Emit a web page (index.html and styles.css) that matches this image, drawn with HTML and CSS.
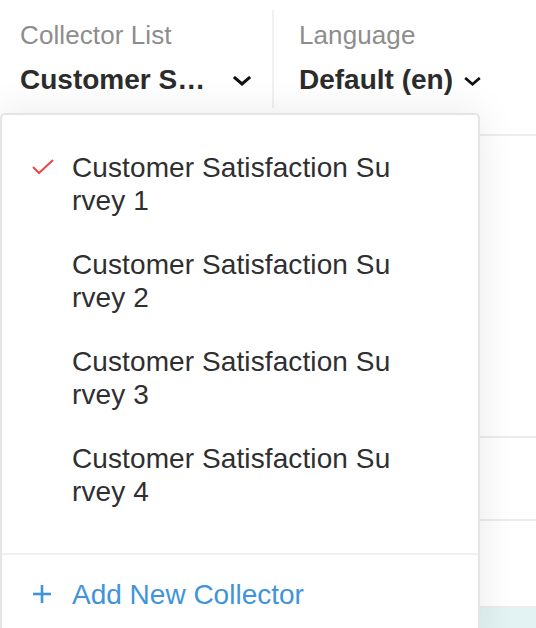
FILE: index.html
```html
<!DOCTYPE html>
<html lang="en">
<head>
<meta charset="utf-8">
<title>Collector List</title>
<link rel="stylesheet" href="styles.css">
</head>
<body>
<div class="page">
  <header class="header">
    <div class="field field-collector">
      <div class="label">Collector List</div>
      <div class="value-row">
        <span class="value value-trunc" title="Customer Satisfaction Survey 1">Customer S…</span>
        <svg class="chev" viewBox="0 0 18 10" width="18" height="10"><polyline points="2,2 9,8 16,2"/></svg>
      </div>
    </div>
    <div class="field field-lang">
      <div class="label">Language</div>
      <div class="value-row">
        <span class="value">Default (en)</span>
        <svg class="chev chev-sm" viewBox="0 0 18 10" width="17" height="9"><polyline points="2,2 9,8 16,2"/></svg>
      </div>
    </div>
  </header>
  <main class="content">
    <div class="row row-a"></div>
    <div class="row row-b"></div>
    <div class="row row-c"></div>
    <div class="row row-d"></div>
    <div class="band"></div>
  </main>

  <div class="menu">
    <ul class="menu-list">
      <li class="item selected">
        <span class="mark"><svg viewBox="0 0 24 18" width="24" height="18"><polyline points="2,9 8,15 22,2"/></svg></span>
        <span class="item-text">Customer Satisfaction Survey 1</span>
      </li>
      <li class="item">
        <span class="mark"></span>
        <span class="item-text">Customer Satisfaction Survey 2</span>
      </li>
      <li class="item">
        <span class="mark"></span>
        <span class="item-text">Customer Satisfaction Survey 3</span>
      </li>
      <li class="item">
        <span class="mark"></span>
        <span class="item-text">Customer Satisfaction Survey 4</span>
      </li>
    </ul>
    <div class="menu-footer">
      <span class="mark plus"><svg viewBox="0 0 20 20" width="20" height="20"><line x1="10" y1="1" x2="10" y2="19"/><line x1="1" y1="10" x2="19" y2="10"/></svg></span>
      <span class="add-text">Add New Collector</span>
    </div>
  </div>
</div>
</body>
</html>
```

FILE: styles.css
```css
* { box-sizing: border-box; }

html, body {
  margin: 0;
  padding: 0;
  background: #ffffff;
}

body {
  font-family: "Liberation Sans", Arial, Helvetica, sans-serif;
  color: #333333;
  overflow: hidden;
}

.page {
  position: relative;
  width: 536px;
  height: 628px;
  overflow: hidden;
}

/* Header */
.header {
  display: flex;
  height: 113px;
  padding: 10px 0 5px;
}

.field {
  display: flex;
  flex-direction: column;
  padding-top: 10px;
}

.field-collector {
  width: 272px;
  padding-left: 20px;
}

.field-lang {
  border-left: 2px solid #f1f1f1;
  padding-left: 25px;
}

.label {
  font-size: 26px;
  line-height: 30px;
  color: #8d8d8d;
  letter-spacing: 0.1px;
}

.value-row {
  display: flex;
  align-items: center;
  margin-top: 13px;
  height: 34px;
}

.value {
  font-size: 28px;
  line-height: 34px;
  font-weight: bold;
  color: #2c2c2c;
  white-space: nowrap;
}

.value-trunc {
  width: 192px;
  overflow: hidden;
  text-overflow: ellipsis;
}

.chev {
  margin-left: 21px;
  margin-top: 2px;
}

.chev-sm {
  margin-left: 11px;
}

.chev polyline {
  fill: none;
  stroke: #111111;
  stroke-width: 3;
  stroke-linecap: square;
}

/* Background content behind the menu */
.content {
  display: flex;
  flex-direction: column;
}

.row {
  border-bottom: 2px solid #ededed;
}

.row-a { height: 23px; }
.row-b { height: 302px; }
.row-c { height: 83px; }
.row-d { height: 87px; }

.band {
  height: 40px;
  background: #e3f3f3;
}

/* Dropdown menu (overlay) */
.menu {
  position: absolute;
  left: 0;
  top: 113px;
  width: 480px;
  height: 540px;
  background: #ffffff;
  border: 2px solid #e5e5e5;
  border-radius: 5px;
  box-shadow: 0 0 40px rgba(0, 0, 0, 0.09);
}

.menu-list {
  list-style: none;
  margin: 0;
  padding: 21px 0 29px;
}

.item {
  display: flex;
  padding: 15px 0 16px;
  font-size: 28px;
  line-height: 33px;
  color: #2f2f2f;
}

.mark {
  flex: 0 0 70px;
  padding-left: 29px;
}

.mark svg {
  display: block;
  margin-top: 7px;
}

.mark polyline {
  fill: none;
  stroke: #e5484d;
  stroke-width: 2;
}

.item-text {
  width: 322px;
  word-break: break-all;
  letter-spacing: 0.1px;
}

.menu-footer {
  display: flex;
  align-items: flex-start;
  border-top: 2px solid #f0f0f0;
  padding-top: 23px;
  height: 80px;
}

.plus svg {
  margin-top: 6px;
  margin-left: 1px;
}

.plus line {
  stroke: #4193da;
  stroke-width: 2.6;
}

.add-text {
  font-size: 28px;
  line-height: 33px;
  color: #4193da;
}
```
